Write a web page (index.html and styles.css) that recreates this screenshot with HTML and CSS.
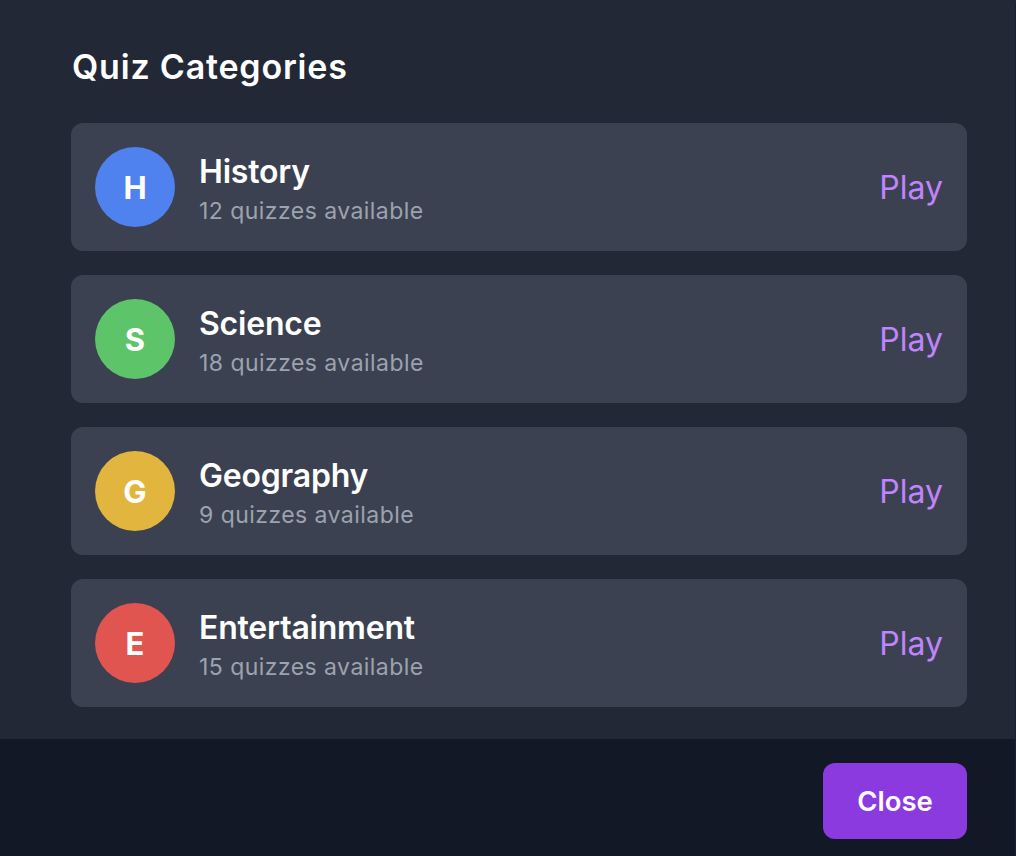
FILE: index.html
```html
<!DOCTYPE html>
<html>
<head>
<meta charset="utf-8">
<link rel="stylesheet" href="styles.css">
</head>
<body>
<div class="modal">
  <div class="content">
    <h2 class="title">Quiz Categories</h2>
    <div class="list">
      <div class="card">
        <div class="badge blue">H</div>
        <div class="info">
          <div class="name">History</div>
          <div class="count">12 quizzes available</div>
        </div>
        <button class="play">Play</button>
      </div>
      <div class="card">
        <div class="badge green">S</div>
        <div class="info">
          <div class="name">Science</div>
          <div class="count">18 quizzes available</div>
        </div>
        <button class="play">Play</button>
      </div>
      <div class="card">
        <div class="badge yellow">G</div>
        <div class="info">
          <div class="name">Geography</div>
          <div class="count">9 quizzes available</div>
        </div>
        <button class="play">Play</button>
      </div>
      <div class="card">
        <div class="badge red">E</div>
        <div class="info">
          <div class="name">Entertainment</div>
          <div class="count">15 quizzes available</div>
        </div>
        <button class="play">Play</button>
      </div>
    </div>
  </div>
  <div class="footer">
    <button class="close">Close</button>
  </div>
</div>
</body>
</html>
```
FILE: styles.css
```css
html, body {
  margin: 0;
  padding: 0;
  height: 100%;
}
body {
  background: #222836;
  font-family: Inter, "Noto Sans", sans-serif;
  color: #ffffff;
}
.modal {
  display: flex;
  flex-direction: column;
  min-height: 856px;
  border-right: 1px solid #1b2030;
  border-top-right-radius: 6px;
  box-sizing: border-box;
}
.content {
  flex: 1;
  padding: 46px 48px 32px 71px;
}
.title {
  margin: 0 0 35px 1px;
  font-size: 34px;
  line-height: 42px;
  font-weight: 600;
  letter-spacing: 0.8px;
}
.list {
  display: flex;
  flex-direction: column;
  gap: 24px;
}
.card {
  display: flex;
  align-items: center;
  background: #3b4150;
  border-radius: 12px;
  padding: 24px;
  height: 128px;
  box-sizing: border-box;
}
.badge {
  width: 80px;
  height: 80px;
  border-radius: 50%;
  display: flex;
  align-items: center;
  justify-content: center;
  font-size: 31px;
  font-weight: 700;
  flex: none;
}
.blue { background: #4f82ee; }
.green { background: #5ec46a; }
.yellow { background: #e2b53e; }
.red { background: #e05550; }
.info {
  flex: 1;
  align-self: stretch;
  margin-left: 24px;
  padding-top: 5px;
  display: flex;
  flex-direction: column;
}
.name {
  font-size: 32px;
  line-height: 40px;
  font-weight: 600;
  letter-spacing: -0.2px;
}
.count {
  margin-top: 4px;
  font-size: 23px;
  line-height: 30px;
  letter-spacing: 0.45px;
  color: #9ca3af;
}
.play {
  background: none;
  border: none;
  padding: 0;
  font-family: inherit;
  font-size: 32px;
  color: #c084fc;
}
.footer {
  background: #131826;
  height: 117px;
  display: flex;
  align-items: flex-start;
  justify-content: flex-end;
  padding: 24px 48px 0 0;
  box-sizing: border-box;
}
.close {
  width: 144px;
  height: 76px;
  border: none;
  border-radius: 12px;
  background: #8b3ae0;
  color: #ffffff;
  font-family: inherit;
  font-size: 27.5px;
  font-weight: 600;
}
```
